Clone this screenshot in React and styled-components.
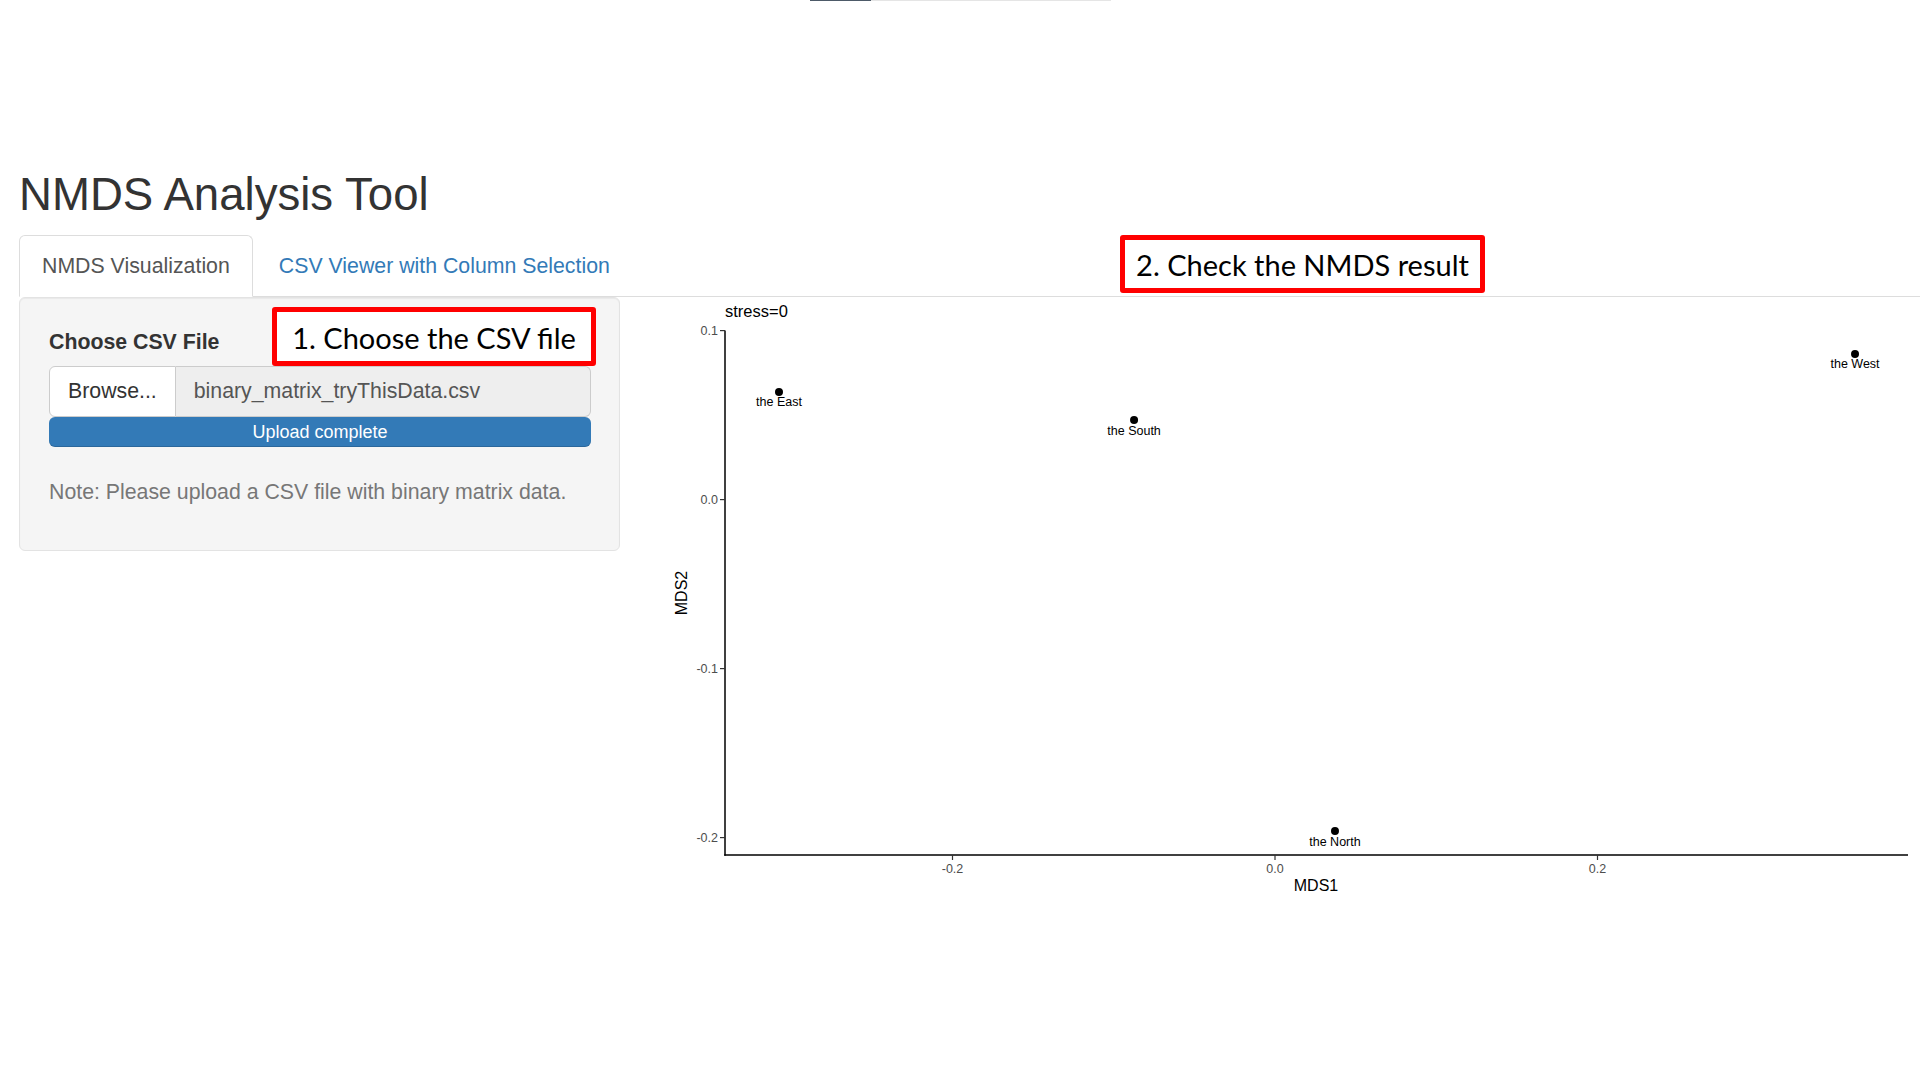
import React from "react";
import styled, { createGlobalStyle } from "styled-components";

const Global = createGlobalStyle`
  html, body { margin: 0; padding: 0; background: #ffffff; }
  body {
    font-family: "Liberation Sans", Arial, Helvetica, sans-serif;
    font-size: 21.3px;
    line-height: 30px;
    color: #333333;
  }
  * { box-sizing: border-box; }
`;

const Page = styled.div`
  position: relative;
  width: 1920px;
  min-height: 1080px;
  overflow: hidden;
`;

const TopBar = styled.div`
  width: 301px;
  height: 1px;
  margin: 0 auto;
  background: #e5e5e5;
  display: flex;
`;

const TopBarFill = styled.div`
  width: 61px;
  height: 100%;
  background: #4d5a68;
`;

const Container = styled.div`
  padding-left: 19px;
`;

const Title = styled.h2`
  margin: 169px 0 15px;
  font-size: 45.6px;
  line-height: 49.5px;
  font-weight: 400;
  color: #333333;
`;

const TabList = styled.ul`
  list-style: none;
  margin: 0;
  padding: 0;
  display: flex;
  border-bottom: 1px solid #dddddd;
`;

const Tab = styled.li`
  margin-right: 3px;
  margin-bottom: -1px;
  padding: 15px 22px;
  line-height: 30px;
  font-size: 21.3px;
  border: 1px solid ${(p) => (p.$active ? "#dddddd" : "transparent")};
  border-bottom-color: ${(p) => (p.$active ? "#ffffff" : "transparent")};
  border-radius: 6px 6px 0 0;
  background: ${(p) => (p.$active ? "#ffffff" : "transparent")};
  color: ${(p) => (p.$active ? "#555555" : "#337ab7")};
  cursor: default;
`;

const Content = styled.div`
  display: flex;
  align-items: flex-start;
  gap: 42px;
`;

const Well = styled.div`
  width: 601px;
  flex: none;
  padding: 29px 28px 28px 29px;
  background: #f5f5f5;
  border: 1px solid #e3e3e3;
  border-radius: 6px;
  box-shadow: inset 0 1px 1px rgba(0, 0, 0, 0.05);
`;

const Label = styled.label`
  display: block;
  font-weight: 700;
  margin-bottom: 9px;
  color: #333333;
`;

const InputGroup = styled.div`
  display: flex;
  height: 51px;
`;

const BrowseButton = styled.span`
  display: flex;
  align-items: center;
  padding: 0 18px;
  background: #ffffff;
  border: 1px solid #cccccc;
  border-radius: 6px 0 0 6px;
  color: #333333;
`;

const FileName = styled.div`
  flex: 1;
  display: flex;
  align-items: center;
  padding: 0 18px;
  background: #eeeeee;
  border: 1px solid #cccccc;
  border-left: none;
  border-radius: 0 6px 6px 0;
  color: #555555;
`;

const Progress = styled.div`
  height: 30px;
  border-radius: 6px;
  background: #337ab7;
  color: #ffffff;
  font-size: 18px;
  line-height: 30px;
  text-align: center;
  box-shadow: inset 0 -1px 0 rgba(0, 0, 0, 0.15);
`;

const Note = styled.p`
  margin: 30px 0 15px;
  color: #777777;
`;

const Main = styled.div`
  flex: 1;
  min-width: 0;
  padding-top: 1px;
`;

const PlotSvg = styled.svg`
  display: block;
  font-family: "Liberation Sans", Arial, Helvetica, sans-serif;
`;

const Annotation = styled.div`
  position: absolute;
  left: ${(p) => p.$left}px;
  top: ${(p) => p.$top}px;
  width: ${(p) => p.$w}px;
  height: ${(p) => p.$h}px;
  border: 5px solid #ff0000;
  border-radius: 3px;
  background: #ffffff;
  display: flex;
  align-items: center;
  justify-content: center;
  padding-top: 1px;
  font-family: Lato, "Open Sans", sans-serif;
  font-size: 29px;
  line-height: 1;
  color: #000000;
  white-space: nowrap;
`;

const xs = (v) => 613 + v * 1612.5;
const ys = (v) => 201.6 - v * 1690;

const points = [
  { name: "the East", x: -0.3076, y: 0.0637 },
  { name: "the South", x: -0.0874, y: 0.0471 },
  { name: "the West", x: 0.3597, y: 0.0862 },
  { name: "the North", x: 0.0372, y: -0.1961 },
];

const yTicks = [0.1, 0.0, -0.1, -0.2];
const xTicks = [-0.2, 0.0, 0.2];

function NmdsPlot() {
  const axisY = 557;
  const axisX = 63;
  return (
    <PlotSvg width="1258" height="600" viewBox="0 0 1258 600">
      <text x={axisX} y={19} fontSize="16.5" fill="#000">stress=0</text>
      <line x1={axisX} y1={ys(0.1)} x2={axisX} y2={axisY + 0.75} stroke="#000" strokeWidth="1.5" />
      <line x1={axisX - 0.75} y1={axisY} x2={1246} y2={axisY} stroke="#000" strokeWidth="1.5" />
      {yTicks.map((t) => (
        <g key={t}>
          <line x1={axisX - 5} y1={ys(t)} x2={axisX} y2={ys(t)} stroke="#333" strokeWidth="1.2" />
          <text x={axisX - 7} y={ys(t) + 4.5} fontSize="12.5" fill="#4d4d4d" textAnchor="end">
            {t.toFixed(1)}
          </text>
        </g>
      ))}
      {xTicks.map((t) => (
        <g key={t}>
          <line x1={xs(t)} y1={axisY} x2={xs(t)} y2={axisY + 5} stroke="#333" strokeWidth="1.2" />
          <text x={xs(t)} y={axisY + 17.5} fontSize="12.5" fill="#4d4d4d" textAnchor="middle">
            {t.toFixed(1)}
          </text>
        </g>
      ))}
      <text x={654} y={593} fontSize="16" fill="#000" textAnchor="middle">MDS1</text>
      <text
        x={0}
        y={0}
        fontSize="16"
        fill="#000"
        textAnchor="middle"
        transform="translate(25 295) rotate(-90)"
      >
        MDS2
      </text>
      {points.map((p) => (
        <g key={p.name}>
          <circle cx={xs(p.x)} cy={ys(p.y)} r="4" fill="#000" />
          <text x={xs(p.x)} y={ys(p.y) + 14.5} fontSize="12.5" fill="#000" textAnchor="middle">
            {p.name}
          </text>
        </g>
      ))}
    </PlotSvg>
  );
}

export default function App() {
  return (
    <Page>
      <Global />
      <TopBar>
        <TopBarFill />
      </TopBar>
      <Container>
        <Title>NMDS Analysis Tool</Title>
        <TabList>
          <Tab $active>NMDS Visualization</Tab>
          <Tab>CSV Viewer with Column Selection</Tab>
        </TabList>
        <Content>
          <Well>
            <Label>Choose CSV File</Label>
            <InputGroup>
              <BrowseButton>Browse...</BrowseButton>
              <FileName>binary_matrix_tryThisData.csv</FileName>
            </InputGroup>
            <Progress>Upload complete</Progress>
            <Note>Note: Please upload a CSV file with binary matrix data.</Note>
          </Well>
          <Main>
            <NmdsPlot />
          </Main>
        </Content>
      </Container>
      <Annotation $left={272} $top={307} $w={324} $h={59}>
        1. Choose the CSV file
      </Annotation>
      <Annotation $left={1120} $top={235} $w={365} $h={58}>
        2. Check the NMDS result
      </Annotation>
    </Page>
  );
}
